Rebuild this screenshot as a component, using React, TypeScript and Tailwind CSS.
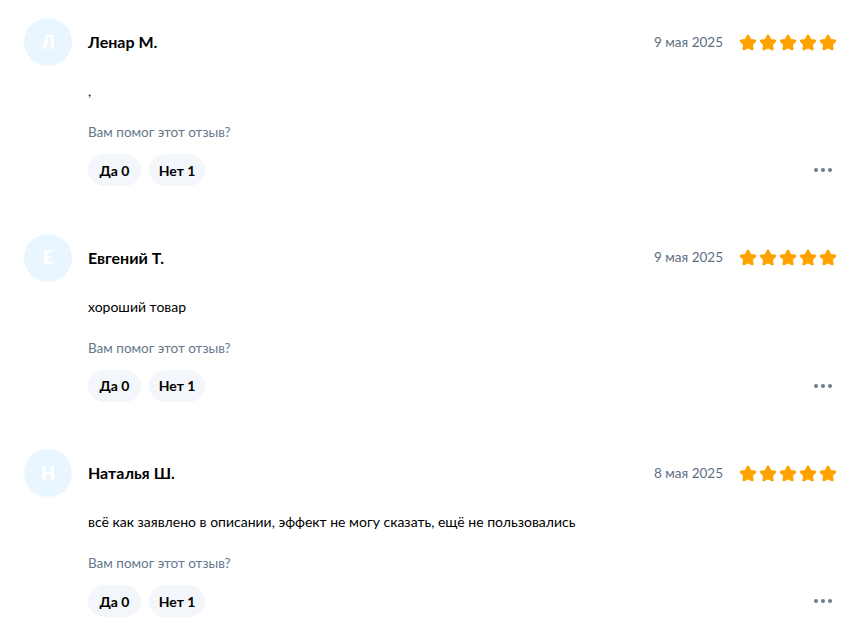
import React from "react"

type Review = {
  initial: string
  name: string
  date: string
  text: string
  yes: number
  no: number
}

const reviews: Review[] = [
  { initial: "Л", name: "Ленар М.", date: "9 мая 2025", text: ",", yes: 0, no: 1 },
  { initial: "Е", name: "Евгений Т.", date: "9 мая 2025", text: "хороший товар", yes: 0, no: 1 },
  {
    initial: "Н",
    name: "Наталья Ш.",
    date: "8 мая 2025",
    text: "всё как заявлено в описании, эффект не могу сказать, ещё не пользовались",
    yes: 0,
    no: 1,
  },
]

function Star() {
  return (
    <svg width="18" height="17" viewBox="0 0 24 23" fill="#FFA200">
      <path
        d="M12 1.5c.5 0 .9.3 1.1.7l2.6 5.3 5.8.8c.9.1 1.3 1.3.6 1.9l-4.2 4.1 1 5.8c.2.9-.8 1.6-1.6 1.2L12 18.6l-5.2 2.7c-.8.4-1.8-.3-1.6-1.2l1-5.8-4.2-4.1c-.7-.6-.3-1.8.6-1.9l5.8-.8 2.6-5.3c.2-.4.6-.7 1-.7z"
        stroke="#FFA200"
        strokeWidth="1.5"
        strokeLinejoin="round"
      />
    </svg>
  )
}

function ReviewItem({ r }: { r: Review }) {
  return (
    <article className="flex gap-4">
      <div className="w-12 h-12 shrink-0 rounded-full bg-[#EAF6FF] flex items-center justify-center text-white font-extrabold text-[18px]">
        {r.initial}
      </div>
      <div className="flex-1 min-w-0">
        <div className="h-12 flex items-center justify-between">
          <p className="text-[16px] font-bold text-black">{r.name}</p>
          <div className="flex items-center gap-[16px]">
            <span className="text-[13.5px] text-[#5E6E82]">{r.date}</span>
            <div className="flex gap-[2px]">
              <Star />
              <Star />
              <Star />
              <Star />
              <Star />
            </div>
          </div>
        </div>
        <p className="mt-[15px] text-[14px] leading-5 text-black">{r.text}</p>
        <p className="mt-[21px] text-[13.5px] leading-5 text-[#66788C]">Вам помог этот отзыв?</p>
        <div className="mt-3 flex items-center justify-between pr-[5px]">
          <div className="flex gap-2">
            <button className="h-8 w-[53px] rounded-full bg-[#F3F6FA] text-[14px] font-bold text-black">
              Да {r.yes}
            </button>
            <button className="h-8 w-[56px] rounded-full bg-[#F3F6FA] text-[14px] font-bold text-black">
              Нет {r.no}
            </button>
          </div>
          <div className="flex gap-[3px]">
            <span className="w-1 h-1 rounded-full bg-[#6B7A8F]" />
            <span className="w-1 h-1 rounded-full bg-[#6B7A8F]" />
            <span className="w-1 h-1 rounded-full bg-[#6B7A8F]" />
          </div>
        </div>
      </div>
    </article>
  )
}

export default function App() {
  return (
    <div className="min-h-screen bg-white font-['Lato','Noto_Sans',sans-serif]">
      <section className="flex flex-col gap-[47.5px] pt-[18px] pl-6 pr-[28px]">
        {reviews.map((r) => (
          <ReviewItem key={r.name} r={r} />
        ))}
      </section>
    </div>
  )
}
